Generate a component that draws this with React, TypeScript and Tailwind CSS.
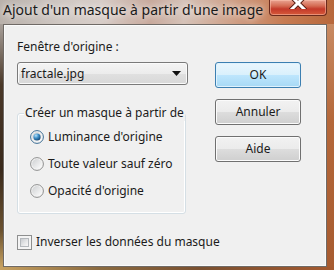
import React from "react";

const font = { fontFamily: '"Noto Sans", "Open Sans", sans-serif' };

function Radio({ checked }: { checked?: boolean }) {
  return (
    <svg width="14" height="14" viewBox="0 0 14 14" className="shrink-0">
      <defs>
        <linearGradient id="rf" x1="0" y1="0" x2="1" y2="1">
          <stop offset="0" stopColor="#cfd1d3" />
          <stop offset="1" stopColor="#fdfdfd" />
        </linearGradient>
        <radialGradient id="rd" cx="0.35" cy="0.3" r="0.8">
          <stop offset="0" stopColor="#b5e2fb" />
          <stop offset="0.45" stopColor="#3d8fc8" />
          <stop offset="1" stopColor="#0e3a66" />
        </radialGradient>
      </defs>
      <circle cx="7" cy="7" r="6.4" fill="#f4f4f4" stroke={checked ? "#3c6d93" : "#8e8f8f"} strokeWidth="1" />
      <circle cx="7" cy="7" r="4.9" fill="url(#rf)" />
      {checked && <circle cx="7" cy="7" r="3.6" fill="url(#rd)" />}
    </svg>
  );
}

function Btn({ label, primary }: { label: string; primary?: boolean }) {
  return (
    <div
      className={
        primary
          ? "h-[26px] w-[86px] rounded-[3px] border border-[#3c7fb1] bg-[linear-gradient(180deg,#eaf6fd_0%,#d9f0fc_50%,#bee6fd_50%,#a7d9f5_100%)] shadow-[inset_0_0_0_1px_#dff2fd] flex items-center justify-center text-[12px] text-[#1b1b1b]"
          : "h-[26px] w-[86px] rounded-[3px] border border-[#707070] bg-[linear-gradient(180deg,#f2f2f2_0%,#ebebeb_50%,#dddddd_50%,#cfcfcf_100%)] shadow-[inset_0_0_0_1px_#fbfbfb] flex items-center justify-center text-[12px] text-[#1b1b1b]"
      }
    >
      {label}
    </div>
  );
}

export default function App() {
  return (
    <div
      className="w-[334px] h-[270px] overflow-hidden flex flex-col bg-[linear-gradient(90deg,#b9b1ab_0%,#cfc7c2_18%,#d7cdc8_30%,#c8a99c_45%,#d5c2b8_55%,#cf9f86_70%,#c77b52_85%,#b8683c_100%)]"
      style={font}
    >
      {/* title bar */}
      <div className="h-[24px] flex items-start shrink-0">
        <div className="pl-[3px] pt-[1px] text-[14px] leading-[18px] text-[#1a1a1a] [text-shadow:0_0_6px_rgba(255,255,255,0.85),0_0_10px_rgba(255,255,255,0.6)] whitespace-nowrap">
          Ajout d'un masque à partir d'une image
        </div>
        <div className="ml-auto mr-[7px] w-[58px] h-[16px] rounded-b-[4px] border border-t-0 border-[#6b2a1c] bg-[linear-gradient(180deg,#e9a392_0%,#d46a52_40%,#c4392a_60%,#d65a3a_100%)] shadow-[inset_0_0_0_1px_rgba(255,200,180,0.5)] flex justify-center">
          <svg width="18" height="12" viewBox="0 0 18 12" className="-mt-[3px]">
            <path d="M3 0 L15 12 M15 0 L3 12" stroke="#5a1f14" strokeWidth="5" strokeLinecap="square" />
            <path d="M3 0 L15 12 M15 0 L3 12" stroke="#ffffff" strokeWidth="3" strokeLinecap="square" />
          </svg>
        </div>
      </div>

      <div className="flex flex-1">
        <div className="w-[3px] bg-[linear-gradient(180deg,#a8a09a_0%,#4a3828_25%,#3a2a1c_60%,#6b5230_85%,#c6a060_100%)]" />
        <div className="w-[324px] h-[243px] border border-[#6f6a66] bg-[#f0f0f0] shadow-[inset_0_0_0_1px_#fbfbfb] text-[12px] text-[#1b1b1b] flex">
          {/* left column */}
          <div className="w-[171px] ml-[13px] flex flex-col pt-[14px]">
            <div className="leading-[16px] h-[16px]">Fenêtre d'origine :</div>
            <div className="mt-[7px] h-[23px] rounded-[3px] border border-[#7a7a7a] bg-[linear-gradient(180deg,#f4f4f4_0%,#ececec_50%,#e0e0e0_51%,#d8d8d8_100%)] shadow-[inset_0_0_0_1px_#fafafa] flex items-center pl-[3px] pr-[5px]">
              <span className="leading-[16px]">fractale.jpg</span>
              <svg width="9" height="5" viewBox="0 0 9 5" className="ml-auto mr-[1px]">
                <path d="M0 0 H9 L4.5 5 Z" fill="#111" />
              </svg>
            </div>
            <div className="relative mt-[28px] w-[169px] rounded-[3px] border border-[#d5dfe5] shadow-[inset_0_0_0_1px_#ffffff] pt-[15px] pb-[14px]">
              <div className="absolute left-[6px] top-[-9px] px-[1px] leading-[16px] bg-[#f0f0f0] whitespace-nowrap">
                Créer un masque à partir de
              </div>
              <div className="flex flex-col gap-[11px] pl-[12px]">
                <div className="flex items-center gap-[4px] h-[16px] whitespace-nowrap">
                  <Radio checked />
                  <span>Luminance d'origine</span>
                </div>
                <div className="flex items-center gap-[4px] h-[16px] whitespace-nowrap">
                  <Radio />
                  <span>Toute valeur sauf zéro</span>
                </div>
                <div className="flex items-center gap-[4px] h-[16px] whitespace-nowrap">
                  <Radio />
                  <span>Opacité d'origine</span>
                </div>
              </div>
            </div>
            <div className="mt-[20px] flex items-center gap-[4px] h-[16px] whitespace-nowrap">
              <div className="w-[15px] h-[15px] border border-[#8e8f8f] bg-[#f4f4f4] p-[2px] shrink-0">
                <div className="w-full h-full border border-[#b4b8bc] bg-[linear-gradient(135deg,#c9ccd0_0%,#e8e9ea_60%,#f7f7f7_100%)]" />
              </div>
              <span>Inverser les données du masque</span>
            </div>
          </div>
          {/* right column */}
          <div className="ml-[27px] pt-[37px] flex flex-col gap-[11px]">
            <Btn label="OK" primary />
            <Btn label="Annuler" />
            <Btn label="Aide" />
          </div>
        </div>
        <div className="flex-1 bg-[linear-gradient(180deg,#c88a62_0%,#b5683a_40%,#a75b30_100%)]" />
      </div>
      <div className="h-[3px] shrink-0 bg-[linear-gradient(90deg,#c6a060_0%,#8a6a40_30%,#7a5030_60%,#a55a30_100%)]" />
    </div>
  );
}
